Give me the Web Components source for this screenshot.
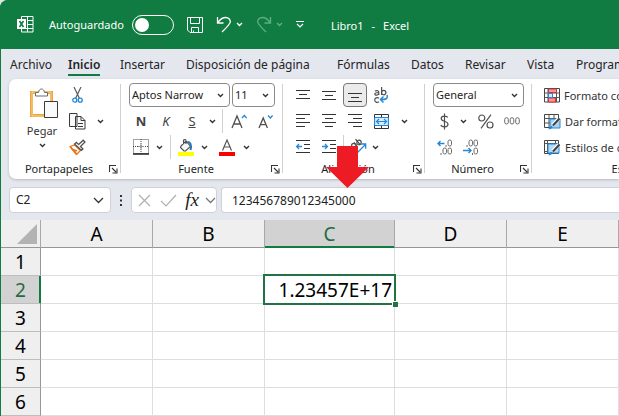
<!DOCTYPE html>
<html lang="es">
<head>
<meta charset="utf-8">
<title>Libro1 - Excel</title>
<style>
html,body{margin:0;min-height:100%;background:#dfe5df}
body{font:12px/16px "Noto Sans","Open Sans",sans-serif;color:#242424;overflow:hidden}
</style>
</head>
<body>
<excel-window></excel-window>
<script>
const ICONS = {
  chev: [7, 5, '<path d="M1 1l2.500 2.500L6 1" fill="none" stroke="currentColor" stroke-width="1.400"/>'],
  bigchev: [11, 7, '<path d="M1 1l4.500 4.500L10 1" fill="none" stroke="currentColor" stroke-width="1.300"/>'],
  excel: [17, 17, '<g fill="none" stroke="#fff"><path d="M4.500 4V.5h11.500v15.500H4.500V13M10.500.5V16M10 4.500h6M10 8.500h6M4.500 12.500H16"/></g><path d="M0 3h9v10H0z" fill="#fff"/><path d="M2.500 5l4 6M6.500 5l-4 6" stroke="#107c41" stroke-width="1.600"/>'],
  save: [16, 16, '<g fill="none" stroke="#fff"><path d="M.5.5h15v15H3L.5 13zM3.500.5v6h9v-6M4.500 15.500v-5h7v5M6.500 15.500v-2"/></g>'],
  undo: [16, 17, '<path d="M1.500 1v6h6M1.800 6.500C4 3.500 6.500 1.500 9.500 1.500c3.500 0 5 2.500 4.800 4.500-.2 2-1.300 3.300-8.300 10" fill="none" stroke="currentColor" stroke-width="1.300"/>'],
  redo: [16, 17, '<path d="M14.500 1v6h-6M14.200 6.500C12 3.500 9.500 1.500 6.500 1.500 3 1.500 1.500 4 1.700 6c.2 2 1.300 3.300 8.300 10" fill="none" stroke="currentColor" stroke-width="1.300"/>'],
  custom: [8, 7, '<path d="M0 .5h8M1 3l3 3 3-3" fill="none" stroke="#fff" stroke-width="1.200"/>'],
  paste: [29, 31, '<path d="M1.500 4.500h20v23h-20z" fill="#fff" stroke="#eda23d" stroke-width="3"/><path d="M2 4h19v24H2z" fill="none" stroke="#f8d491" stroke-width="1"/><path d="M5.500 8V4.500h3C9 2 10 1 11.500 1S14 2 14.500 4.500h3V8z" fill="#fff" stroke="#6b6b6b"/><path d="M14.500 13.500h13v16h-13z" fill="#fafafa" stroke="#3b3a39"/>'],
  cut: [11, 16, '<path d="M2 0l5.500 11.500M9 0L3.500 11.500" stroke="#5b5b5b" stroke-width="1.200"/><g fill="#fff" stroke="#2488d8" stroke-width="1.300"><circle cx="2.800" cy="13.200" r="2"/><circle cx="8.200" cy="13.200" r="2"/></g>'],
  copy: [17, 17, '<g fill="#fafafa" stroke="#3b3a39"><path d="M.5.5h7.500v13H.500zM6.500 3.500h5.500l4 4v8.500H6.500zM12 3.500v4h4"/><path d="M9 10.500h5M9 13.500h5"/></g>'],
  brush: [17, 16, '<path d="M1 7.500l4.500-1.500 6 5.500-4 4z" fill="#fff" stroke="#e8761b" stroke-width="1.300"/><path d="M1.500 8l6 7M4 10.500l4 1.500" stroke="#e8761b" stroke-width="1.800"/><path d="M5.500 5l7 6.500 1.500-1.500-2.500-2.500L16 3l-1.800-1.800L9.700 5.500 7.300 3.300z" fill="#f4f4f4" stroke="#505050" stroke-width="1.200"/>'],
  launch: [9, 9, '<path d="M.5 7V.5H7M3 3l4 4M8 3.500V8H3.500" fill="none" stroke="#333" stroke-width="1.100"/>'],
  border: [16, 16, '<path d="M.5.5h15v14H.5zM8 0v15M0 7.500h16" fill="none" stroke="#444" stroke-dasharray="1 1"/><path d="M5 7.500h6M8 5v5" stroke="#999"/><path d="M0 15h16" stroke="#222" stroke-width="1.500"/>'],
  fill: [16, 17, '<path d="M3 7l5-5 4.500 5.500-5 4.500H6L2.500 8.500zM5.500 5V1.500c0-1.300 2.500-1.300 2.500 0V5" fill="#f7f7f7" stroke="#505050" stroke-width="1.100"/><path d="M9.500 3c2.500-.5 4.500 3 3 8" fill="none" stroke="#2878b8" stroke-width="2"/><path d="M0 13h16v4H0z" fill="#ff0"/>'],
  fcolor: [16, 17, '<path d="M3.500 11.500L8 1l4.500 10.500M5 8h6" fill="none" stroke="#555" stroke-width="1.200"/><path d="M0 13h16v4H0z" fill="#f00"/>'],
  grow: [16, 15, '<path d="M1 14L6 2l5 12M2.800 10h6.500" fill="none" stroke="#505050" stroke-width="1.300"/><path d="M11 4l2.300-2.500L15.600 4" fill="none" stroke="#2488d8" stroke-width="1.300"/>'],
  shrink: [16, 15, '<path d="M1 14L5.200 4l4.200 10M2.500 10.700h5.300" fill="none" stroke="#505050" stroke-width="1.300"/><path d="M10 1.500L12.300 4l2.300-2.500" fill="none" stroke="#2488d8" stroke-width="1.300"/>'],
  top: [14, 13, '<path d="M0 1.500h14M3 5.500h8M0 9.500h14" stroke="#333"/>'],
  mid: [14, 13, '<path d="M0 2.500h14M3 6.500h8M0 10.500h14" stroke="#333"/>'],
  bot: [14, 13, '<path d="M0 4.500h14M3 8.500h8M0 12.500h14" stroke="#333"/>'],
  left: [14, 14, '<path d="M0 .5h14M0 4.500h9M0 8.500h14M0 12.500h9" stroke="#333"/>'],
  center: [14, 14, '<path d="M0 .5h14M3 4.500h8M0 8.500h14M3 12.500h8" stroke="#333"/>'],
  right: [14, 14, '<path d="M0 .5h14M5 4.500h9M0 8.500h14M5 12.500h9" stroke="#333"/>'],
  wrap: [14, 17, '<g fill="none" stroke="#505050" stroke-width="1.200"><path d="M1 4.300c.6-1 3.800-1.300 3.800.9V8M4.800 5.500C2 5.600.8 6 .8 7c0 1.600 3.200 1.400 4 0M7.600 0v8"/><circle cx="9.700" cy="5.600" r="2.200"/><path d="M5 11.300c-2-1.300-4.300-.3-4.300 1.700s2.300 3 4.300 1.700"/></g><path d="M13 8c1 4-1 4.500-6 4.500M9.500 9.500l-3 3 3 3" fill="none" stroke="#2488d8" stroke-width="1.500"/>'],
  merge: [15, 15, '<path d="M0 3.500h15v8H0z" fill="#d9ecfb"/><path d="M.5.500h14v14H.5zM7.500.5v3M7.500 11.500v3" fill="none" stroke="#333"/><path d="M.5 3.500h14M.5 11.500h14M.5 3.500v8M14.500 3.500v8M2.500 7.500h10M5 5L2.500 7.500 5 10M10 5l2.500 2.500L10 10" fill="none" stroke="#2488d8" stroke-width="1.200"/>'],
  outdent: [14, 14, '<path d="M0 .5h14M8 4.500h6M8 8.500h6M0 12.500h14" stroke="#333"/><path d="M6 6.500H.8M3 4L.6 6.500 3 9" fill="none" stroke="#2488d8" stroke-width="1.300"/>'],
  indent: [14, 14, '<path d="M0 .5h14M8 4.500h6M8 8.500h6M0 12.500h14" stroke="#333"/><path d="M0 6.500h5.300M3 4l2.400 2.500L3 9" fill="none" stroke="#2488d8" stroke-width="1.300"/>'],
  rotate: [17, 16, '<g fill="none" stroke="#505050" stroke-width="1.200"><circle cx="3.800" cy="6.500" r="2.200"/><path d="M4 3.500l3.500 4.300M5.500 0l4.800 5.800"/><circle cx="9" cy="3.400" r="2.200"/></g><path d="M7 14l8.500-8.500M11 5h4.700v4.700" fill="none" stroke="#2488d8" stroke-width="1.300"/>'],
  dollar: [9, 17, '<path d="M7.800 4.500C7 2.800 1.200 2.300 1.200 5.500c0 3.500 6.800 2 6.800 5.800 0 3.400-6.200 3.200-7.200.7M4.500.5v16" fill="none" stroke="#505050" stroke-width="1.200"/>'],
  percent: [16, 15, '<g fill="none" stroke="#505050" stroke-width="1.200"><circle cx="3.800" cy="4" r="3"/><circle cx="12" cy="11" r="3"/><path d="M13 .7L3 14.300"/></g>'],
  thou: [16, 8, '<g fill="none" stroke="#6b6b6b"><rect x=".7" y=".7" width="3.600" height="6.300" rx="1.800"/><rect x="6.200" y=".7" width="3.600" height="6.300" rx="1.800"/><rect x="11.700" y=".7" width="3.600" height="6.300" rx="1.800"/></g>'],
  decinc: [16, 16, '<g fill="none" stroke="#6b6b6b"><rect x="11" y="1" width="3.500" height="6" rx="1.700"/><rect x="6" y="9" width="3.500" height="6" rx="1.700"/><rect x="11" y="9" width="3.500" height="6" rx="1.700"/><path d="M9 6v2M4 14v2"/></g><path d="M7.500 4.500H1M3.500 2L1 4.500 3.500 7" fill="none" stroke="#2488d8" stroke-width="1.400"/>'],
  decdec: [16, 16, '<g fill="none" stroke="#6b6b6b"><rect x="6" y="1" width="3.500" height="6" rx="1.700"/><rect x="11" y="1" width="3.500" height="6" rx="1.700"/><rect x="11" y="9" width="3.500" height="6" rx="1.700"/><path d="M4 6v2M9.500 14v2"/></g><path d="M0 11.500h8M5.500 9L8 11.500 5.500 14" fill="none" stroke="#2488d8" stroke-width="1.400"/>'],
  cond: [16, 15, '<path d="M.5.5h15v13.500H.5z" fill="#fff" stroke="#444"/><path d="M.5 5h15M.5 9.500h15M4 .5V14M8 .5V14M12.500.5V14" stroke="#555"/><path d="M4.500 1h8v3.500h-8zM4.500 10h7v4h-7z" fill="#f49a9f" stroke="#d13438"/><path d="M4.500 5.500h4v4h-4z" fill="#d9ecfb" stroke="#2488d8"/>'],
  tablefmt: [17, 16, '<path d="M.5.5h14v13H.5z" fill="#fff" stroke="#444"/><path d="M.5 4.500h14M.5 9h14M5 .5v13M10 .5v13" stroke="#555"/><path d="M6 5h10v9H6z" fill="#a9d3f2" stroke="#2488d8"/><path d="M15 4.500L9 11" stroke="#fff" stroke-width="4"/><path d="M15.500 4.500L9 11.500" stroke="#444" stroke-width="2.200"/><path d="M3.500 15.300c2 0 1.500-3 3.700-3.300 2 0 2.300 3.300-3.700 3.300z" fill="#2488d8"/>'],
  cellfmt: [17, 16, '<path d="M.5.5h14v13H.5z" fill="#fff" stroke="#444"/><path d="M.5 3.500h14M3.500.5v13M11.500.5v3M.5 11.500h4" stroke="#555"/><path d="M4 4h11v9H4z" fill="#b5daf5" stroke="#2488d8"/><path d="M15 4.500L9 11" stroke="#fff" stroke-width="4"/><path d="M15.500 4.500L9 11.500" stroke="#444" stroke-width="2.200"/><path d="M3.500 15.300c2 0 1.500-3 3.700-3.300 2 0 2.300 3.300-3.700 3.300z" fill="#2488d8"/>'],
  cancel: [13, 13, '<path d="M1 1l11 11M12 1L1 12" stroke="#b0b0b0" stroke-width="1.200"/>'],
  accept: [17, 13, '<path d="M1 7l5 5L16 1" fill="none" stroke="#b0b0b0" stroke-width="1.200"/>'],
  dots: [4, 13, '<path d="M1 1h2v2H1zM1 5.500h2v2H1zM1 10h2v2H1z" fill="#333"/>'],
  corner: [20, 20, '<path d="M20 0v20H0z" fill="#b3b3b3"/>'],
  arrow: [43, 42, '<path d="M11 0h21v21h11L21.500 42 0 21h11z" fill="#ed1c24"/>']
};

function define(name, css, html) {
  customElements.define(name, class extends HTMLElement {
    connectedCallback() {
      if (this.shadowRoot) return;
      const root = this.attachShadow({ mode: 'open' });
      const tpl = document.createElement('template');
      tpl.innerHTML = '<style>*{box-sizing:border-box}' + css + '</style>' +
        (typeof html === 'function' ? html(this) : html);
      root.append(tpl.content.cloneNode(true));
    }
  });
}

define('ui-icon', ':host{display:inline-flex;flex:none}svg{display:block}', el => {
  const [w, h, body] = ICONS[el.getAttribute('name')];
  return `<svg width="${w}" height="${h}" viewBox="0 0 ${w} ${h}" aria-hidden="true">${body}</svg>`;
});

define('tool-button', `
  :host{display:flex;justify-content:center;align-items:center}
  button{all:unset;display:flex;align-items:center;justify-content:center;gap:4px;white-space:nowrap;color:#333}
  :host([light]) button{color:#fff}
  :host([dim]) button{color:#5fae80}
  :host([gray]) button{color:#777}
  :host([pressed]) button{width:24px;height:24px;box-sizing:border-box;border:1px solid #777;border-radius:4px;background:#ebebeb}
`, el => `<button type="button" aria-label="${el.getAttribute('label')}">${el.hasAttribute('icon') ? `<ui-icon name="${el.getAttribute('icon')}"></ui-icon>` : ''}<slot></slot></button>`);

define('drop-down', `
  :host{display:grid;grid-template-columns:1fr 14px;align-items:center;height:24px;border:1px solid #8a8a8a;border-radius:4px;background:#fff}
  select{grid-area:1/1/2/3;appearance:none;border:0;background:none;padding:0 0 0 2px;margin:0;font:inherit;color:#242424;width:100%;height:22px;outline:0}
  ui-icon{grid-area:1/2;pointer-events:none;justify-self:start;color:#333;padding-left:2px}
  :host([large]){height:26px;border-color:#d0d1d6;grid-template-columns:1fr 18px}
  :host([large]) select{padding-left:6px}
  :host([large]) ui-icon{padding-left:1px}
`, el => `<select aria-label="${el.getAttribute('label')}"><option>${el.getAttribute('value')}</option></select><ui-icon name="${el.hasAttribute('large') ? 'bigchev' : 'chev'}"></ui-icon>`);

define('title-bar', `
  :host{display:flex;align-items:center;gap:13px;height:49px;padding-left:17px;background:#107c41;color:#fff;font-size:11px}
  .auto{display:flex;align-items:center;gap:8px;padding-left:2px}
  input{appearance:none;margin:0;width:42px;height:20px;border:1px solid #fff;border-radius:10px;display:flex;align-items:center;padding-left:2px}
  input::before{content:"";width:14px;height:14px;border-radius:50%;background:#fff}
  .pair{display:flex;align-items:center;gap:4px}
  .title{display:flex;gap:8px;padding:2px 0 0 14px}
`, `
  <ui-icon name="excel"></ui-icon>
  <div class="auto"><label for="auto">Autoguardado</label><input id="auto" type="checkbox" role="switch"></div>
  <tool-button light icon="save" label="Guardar"></tool-button>
  <div class="pair"><tool-button light icon="undo" label="Deshacer"></tool-button>
  <tool-button light icon="chev" label="Opciones de deshacer"></tool-button></div>
  <div class="pair"><tool-button dim icon="redo" label="Rehacer"></tool-button>
  <tool-button dim icon="chev" label="Opciones de rehacer"></tool-button></div>
  <tool-button light icon="custom" label="Personalizar"></tool-button>
  <div class="title"><span>Libro1</span><span>-</span><span>Excel</span></div>`);

define('ribbon-tabs', `
  :host{display:block;height:30px;overflow:hidden}
  nav{display:grid;grid-template-columns:58px 52px 66px 151px 74px 54px 62px 49px 1fr;justify-items:start;padding:6px 0 0 9px}
  button{all:unset;font-size:12px;line-height:19px;border-bottom:2px solid transparent;white-space:nowrap}
  button[aria-selected=true]{font-weight:600;border-color:#107c41}
`, `<nav role="tablist">${['Archivo', 'Inicio', 'Insertar', 'Disposición de página', 'Fórmulas', 'Datos', 'Revisar', 'Vista', 'Programador'].map((t, i) => `<button type="button" role="tab" aria-selected="${i === 1}">${t}</button>`).join('')}</nav>`);

define('ribbon-group', `
  :host{display:flex;flex-direction:column;flex:none;position:relative}
  :host::after{content:"";position:absolute;right:0;top:5px;bottom:6px;width:1px;background:#d0d0d0}
  .body{height:78px;margin-top:3px;display:grid;grid-template-rows:repeat(3,26px)}
  footer{display:flex;align-items:center;height:18px;padding-right:3px}
  span{flex:1;text-align:center}
`, el => `<div class="body"><slot></slot></div><footer><span>${el.getAttribute('name')}</span><tool-button icon="launch" label="Más opciones"></tool-button></footer>`);

define('ribbon-panel', `
  :host{display:flex;height:100px;margin-left:8px;background:#fff;border-radius:7px 0 0 7px;box-shadow:0 1px 3px #0003;overflow:hidden;font-size:11px}
  .row{display:grid;align-items:center;justify-items:center}
  i.sep{width:1px;height:24px;background:#d0d0d0}
  .clip{grid-row:1/4;display:grid;grid-template:repeat(3,26px)/44px 26px 20px;padding-left:11px;align-items:center}
  .paste{grid-row:1/4;display:flex;flex-direction:column;align-items:center;height:78px;padding-top:6px}
  .paste tool-button{height:15px}
  .paste tool-button:first-child{height:31px;margin:0 0 4px 5px}
  .f1{grid-template-columns:101px 43px;gap:2px;padding-left:8px}
  .f1 drop-down,.n1 drop-down{width:100%}
  .f2{grid-template-columns:24px 26px 26px 14px 7px 26px 28px;padding-left:8px}
  .f3{grid-template-columns:24px 12px 10px 22px 14px 32px 6px;padding-left:8px}
  .a1,.a2{grid-template-columns:repeat(4,26px) 20px;padding-left:7px}
  .a3{grid-template-columns:26px 26px 3px 26px 8px;padding-left:7px}
  .n1{padding:0 8px}
  .n2{grid-template-columns:22px 16px 30px 22px;padding-left:8px}
  .n3{grid-template-columns:26px 26px;padding-left:7px}
  .st{justify-items:start;padding:1px 0 0 12px}
  b,em,u{font-size:13px;color:#444;font-weight:400}
  b{font-weight:700}
`, `
  <ribbon-group name="Portapapeles" style="width:112px">
    <div class="clip">
      <div class="paste"><tool-button icon="paste" label="Pegar"></tool-button><tool-button label="Pegar">Pegar</tool-button><tool-button icon="chev" label="Opciones de pegado"></tool-button></div>
      <tool-button icon="cut" label="Cortar"></tool-button><span></span>
      <tool-button icon="copy" label="Copiar"></tool-button><tool-button icon="chev" label="Opciones de copia"></tool-button>
      <tool-button icon="brush" label="Copiar formato"></tool-button>
    </div>
  </ribbon-group>
  <ribbon-group name="Fuente" style="width:162px">
    <div class="row f1"><drop-down label="Fuente" value="Aptos Narrow"></drop-down><drop-down label="Tamaño" value="11"></drop-down></div>
    <div class="row f2"><tool-button label="Negrita"><b>N</b></tool-button><tool-button label="Cursiva"><em>K</em></tool-button><tool-button label="Subrayado"><u>S</u></tool-button><tool-button icon="chev" label="Opciones de subrayado"></tool-button><i class="sep"></i><tool-button icon="grow" label="Aumentar fuente"></tool-button><tool-button icon="shrink" label="Disminuir fuente"></tool-button></div>
    <div class="row f3"><tool-button icon="border" label="Bordes"></tool-button><tool-button icon="chev" label="Opciones de bordes"></tool-button><i class="sep"></i><tool-button icon="fill" label="Color de relleno"></tool-button><tool-button icon="chev" label="Opciones de relleno"></tool-button><tool-button icon="fcolor" label="Color de fuente"></tool-button><tool-button icon="chev" label="Opciones de color"></tool-button></div>
  </ribbon-group>
  <ribbon-group name="Alineación" style="width:142px">
    <div class="row a1"><tool-button icon="top" label="Arriba"></tool-button><tool-button icon="mid" label="Medio"></tool-button><tool-button pressed icon="bot" label="Abajo"></tool-button><tool-button icon="wrap" label="Ajustar texto"></tool-button></div>
    <div class="row a2"><tool-button icon="left" label="Izquierda"></tool-button><tool-button icon="center" label="Centrar"></tool-button><tool-button icon="right" label="Derecha"></tool-button><tool-button icon="merge" label="Combinar"></tool-button><tool-button icon="chev" label="Opciones de combinar"></tool-button></div>
    <div class="row a3"><tool-button icon="outdent" label="Disminuir sangría"></tool-button><tool-button icon="indent" label="Aumentar sangría"></tool-button><i class="sep"></i><tool-button icon="rotate" label="Orientación"></tool-button><tool-button icon="chev" label="Opciones de orientación"></tool-button></div>
  </ribbon-group>
  <ribbon-group name="Número" style="width:107px">
    <div class="row n1"><drop-down label="Formato de número" value="General"></drop-down></div>
    <div class="row n2"><tool-button icon="dollar" label="Contabilidad"></tool-button><tool-button icon="chev" label="Opciones de moneda"></tool-button><tool-button icon="percent" label="Porcentaje"></tool-button><tool-button icon="thou" label="Millares"></tool-button></div>
    <div class="row n3"><tool-button icon="decinc" label="Aumentar decimales"></tool-button><tool-button icon="decdec" label="Disminuir decimales"></tool-button></div>
  </ribbon-group>
  <ribbon-group name="Estilos" style="width:204px">
    <div class="row st"><tool-button icon="cond" label="Formato condicional">Formato condicional</tool-button></div>
    <div class="row st"><tool-button icon="tablefmt" label="Dar formato como tabla">Dar formato como tabla</tool-button></div>
    <div class="row st"><tool-button icon="cellfmt" label="Estilos de celda">Estilos de celda</tool-button></div>
  </ribbon-group>`);

define('formula-bar', `
  :host{display:flex;padding:8px 0 7px 8px;height:41px}
  .name{width:102px;flex:none}
  .dots{width:20px;display:flex;align-items:center;justify-content:center}
  .tools{width:86px;flex:none;height:26px;background:#fff;border:1px solid #d0d1d6;border-radius:4px;display:grid;grid-template-columns:24px 24px 24px 12px;align-items:center}
  em{font:italic 400 19px/20px "Liberation Serif",serif;color:#222}
  input{flex:1;min-width:0;height:26px;margin-left:4px;border:1px solid #d0d1d6;border-right:0;border-radius:4px 0 0 4px;padding:0 10px;background:#fff;font:inherit;color:#222;outline:0}
`, `
  <drop-down large class="name" label="Cuadro de nombres" value="C2"></drop-down>
  <span class="dots"><ui-icon name="dots"></ui-icon></span>
  <div class="tools"><tool-button icon="cancel" label="Cancelar"></tool-button><tool-button icon="accept" label="Introducir"></tool-button><tool-button label="Insertar función"><em>fx</em></tool-button><tool-button gray icon="bigchev" label="Más funciones"></tool-button></div>
  <input aria-label="Barra de fórmulas" value="123456789012345000">`);

define('sheet-grid', `
  :host{display:block;background:#fff;color:#000;font-family:"Noto Sans",sans-serif}
  table{border-collapse:separate;border-spacing:0;table-layout:fixed;width:100%}
  th,td{height:28px;padding:0;font-size:19px;line-height:26px;font-weight:400;border-right:1px solid #dedede;border-bottom:1px solid #dedede}
  th{background:#efefef}
  thead th{border-bottom-color:#979797;border-right-color:#a8a8a8}
  tbody th{border-right-color:#979797;border-bottom-color:#bdbdbd}
  th.on{background:#d2d2d2;color:#1f6b43}
  thead th.on{box-shadow:inset 0 -1px #107c41;border-bottom-color:#107c41}
  tbody th.on{box-shadow:inset -1px 0 #107c41;border-right-color:#107c41}
  .corner ui-icon{display:flex;justify-content:flex-end;padding-right:3px}
  td{text-align:right}
  td.on{position:relative;padding-right:2px}
  td.on::before{content:"";position:absolute;inset:-2px;border:2px solid #217346}
  td.on::after{content:"";position:absolute;right:-4px;bottom:-4px;width:5px;height:5px;background:#217346;border:solid #fff;border-width:1px 0 0 1px;box-sizing:content-box}
`, `<table><colgroup><col style="width:40px"><col style="width:112px"><col style="width:112px"><col style="width:130px"><col style="width:112px"><col style="width:112px"></colgroup>
  <thead><tr><th class="corner"><ui-icon name="corner"></ui-icon></th>${[...'ABCDE'].map(c => `<th scope="col"${c === 'C' ? ' class="on"' : ''}>${c}</th>`).join('')}</tr></thead>
  <tbody>${[1, 2, 3, 4, 5, 6].map(r => `<tr><th scope="row"${r === 2 ? ' class="on"' : ''}>${r}</th>${[...'ABCDE'].map(c => c + r === 'C2' ? '<td class="on">1.23457E+17</td>' : '<td></td>').join('')}</tr>`).join('')}</tbody></table>`);

define('excel-window', `
  :host{display:block;position:relative;overflow:hidden;border-radius:8px 0 0 0;background:#107c41}
  main{margin-left:1px;background:#e5e7ef}
  .pointer{position:absolute;left:326px;top:146px}
`, `<title-bar></title-bar>
  <main><ribbon-tabs></ribbon-tabs><ribbon-panel></ribbon-panel><formula-bar></formula-bar><sheet-grid></sheet-grid></main>
  <ui-icon class="pointer" name="arrow"></ui-icon>`);
</script>
</body>
</html>
